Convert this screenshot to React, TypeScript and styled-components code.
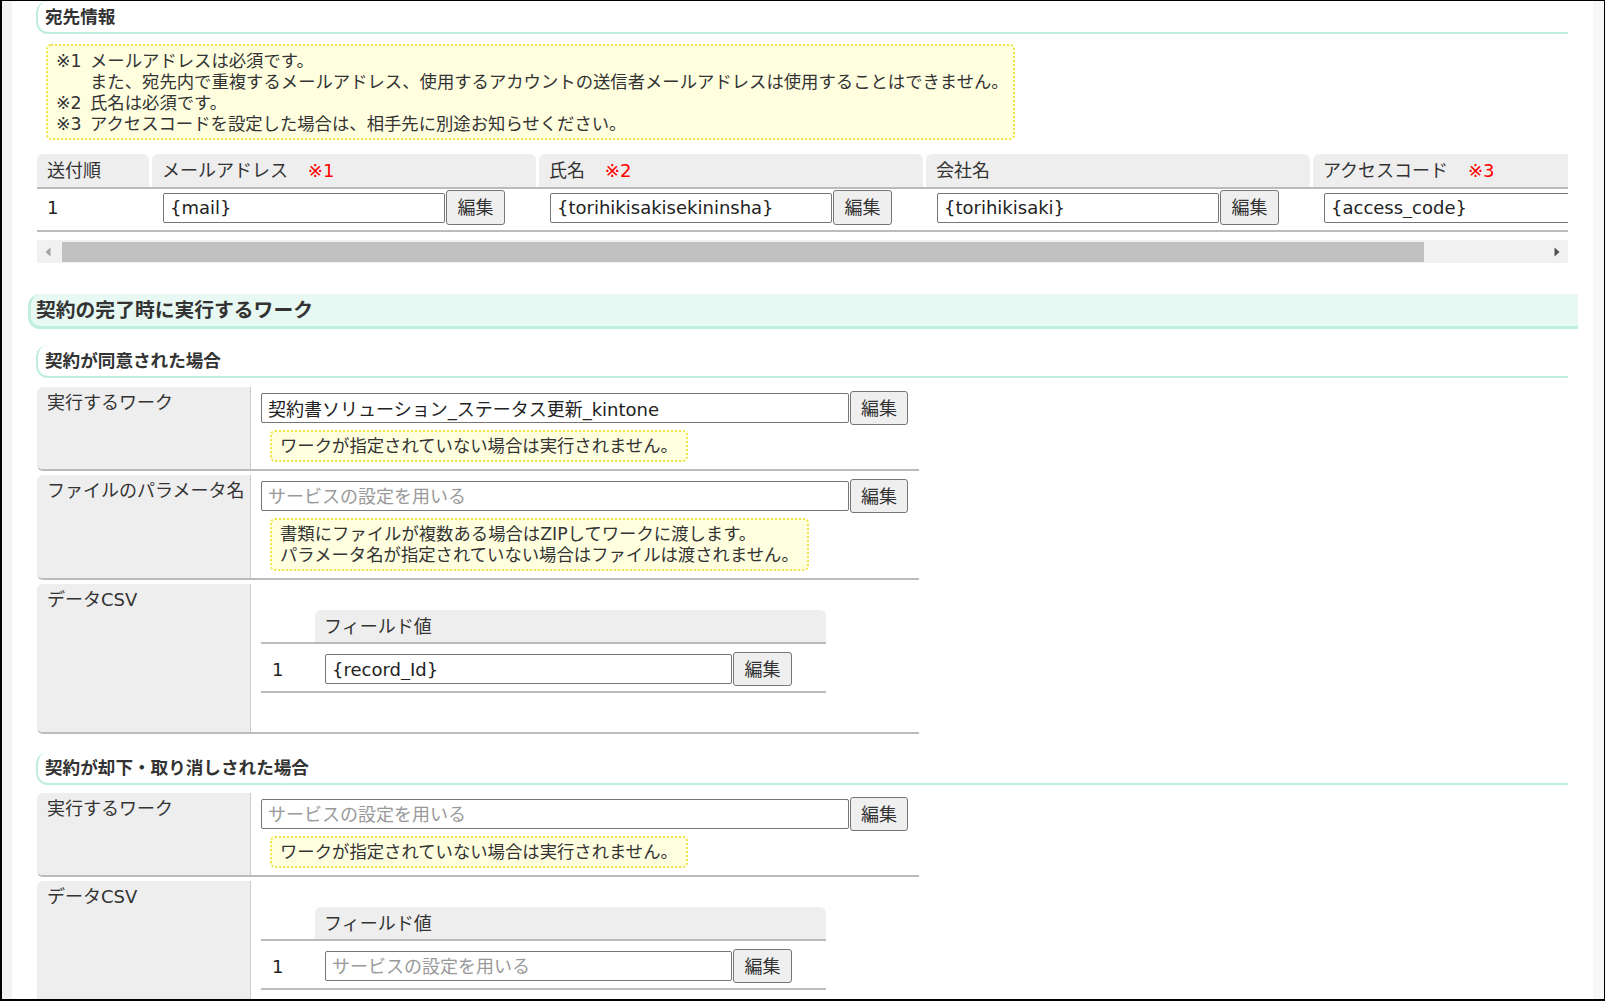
import React from "react";
import styled, { createGlobalStyle } from "styled-components";

const GlobalStyle = createGlobalStyle`
  html, body { margin: 0; padding: 0; background: #fff; }
  body {
    font-family: "DejaVu Sans", "Noto Sans CJK JP", sans-serif;
    color: #333;
  }
  * { box-sizing: border-box; }
`;

const MINT = "#bfeedf";
const FONT = "18px";
const SMALL = "17.35px";

const Frame = styled.div`
  width: 1605px;
  height: 1001px;
  border: 1px solid #000;
  border-left-width: 2px;
  border-bottom-width: 2px;
  display: flex;
  overflow: hidden;
  background: #fff;
`;

const SideStrip = styled.div<{ $w: number; $bg: string }>`
  flex: 0 0 ${(p) => p.$w}px;
  background: ${(p) => p.$bg};
`;

const Main = styled.main`
  flex: 1;
  min-width: 0;
  padding: 0 25px 0 24px;
  overflow: hidden;
  font-size: ${FONT};
  line-height: 21px;
`;

const SubHeader = styled.h3<{ $mt: number }>`
  margin: ${(p) => p.$mt}px 0 0;
  height: 33px;
  padding: 0 0 2px 7px;
  border-left: 2px solid ${MINT};
  border-bottom: 2px solid ${MINT};
  border-radius: 12px 0 0 12px;
  display: flex;
  align-items: center;
  font-family: "Noto Sans CJK JP", sans-serif;
  font-size: 17.6px;
  font-weight: bold;
  color: #333;
`;

const BigHeader = styled.h2`
  margin: 31px -10px 0 -8px;
  height: 35px;
  padding: 0 0 3px 5px;
  background: #e8f8f2;
  border-left: 3px solid ${MINT};
  border-bottom: 3px solid ${MINT};
  border-radius: 12px 0 0 12px;
  display: flex;
  align-items: center;
  font-family: "Noto Sans CJK JP", sans-serif;
  font-size: 19.8px;
  font-weight: bold;
  color: #333;
`;

const NoteBox = styled.div`
  margin: 10px 0 0 10px;
  width: 969px;
  padding: 5px 8px 3px;
  border: 2px dotted #eee44a;
  border-radius: 5px;
  background: #ffffe0;
  color: #333;
  font-size: ${SMALL};
  white-space: nowrap;
`;

const NoteItem = styled.div`
  display: grid;
  grid-template-columns: 34px 1fr;
`;

const Hint = styled.div`
  display: inline-block;
  margin: 5px 0 0 9px;
  padding: 4px 8px 3px;
  border: 2px dotted #eee44a;
  border-radius: 5px;
  background: #ffffe0;
  color: #333;
  font-size: ${SMALL};
  white-space: nowrap;
`;

/* ---------- recipient table ---------- */

const ScrollArea = styled.div`
  margin: 14px 0 0 1px;
  width: 1531px;
  overflow: hidden;
`;

const GridRow = styled.div`
  display: grid;
  grid-template-columns: 112px repeat(4, 384px);
  column-gap: 3px;
  width: max-content;
  border-bottom: 2px solid #bbb;
`;

const HeadCell = styled.div`
  height: 33px;
  padding-left: 10px;
  display: flex;
  align-items: center;
  background: #eee;
  border-radius: 6px 6px 0 0;
  color: #333;
  white-space: nowrap;
`;

const Req = styled.span`
  margin-left: 1.1em;
  color: #ff0000;
`;

const DataCell = styled.div<{ $pl: number }>`
  height: 41px;
  padding: 1px 0 0 ${(p) => p.$pl}px;
`;

const IndexText = styled.div`
  height: 35px;
  display: flex;
  align-items: center;
  color: #222;
`;

const InputLine = styled.div<{ $h?: number }>`
  display: flex;
  align-items: center;
  height: ${(p) => p.$h ?? 34}px;
`;

const TextInput = styled.input<{ $w: number }>`
  width: ${(p) => p.$w}px;
  height: 30px;
  padding: 0 6px;
  border: 1px solid #767676;
  border-radius: 2px;
  background: #fff;
  font: inherit;
  font-size: ${FONT};
  color: #222;
  outline: none;
  &::placeholder { color: #999; }
`;

const EditButton = styled.button<{ $w?: number; $h?: number }>`
  width: ${(p) => p.$w ?? 58}px;
  height: ${(p) => p.$h ?? 34}px;
  margin-left: 1px;
  padding: 0;
  border: 1px solid #767676;
  border-radius: 3px;
  background: #efefef;
  font: inherit;
  font-size: ${FONT};
  color: #333;
  flex: 0 0 auto;
`;

const ScrollTrack = styled.div`
  margin: 8px 0 0 1px;
  width: 1531px;
  height: 23px;
  background: #f1f1f1;
  display: flex;
  align-items: stretch;
`;

const ArrowBox = styled.div`
  flex: 0 0 22px;
  display: flex;
  align-items: center;
  justify-content: center;
`;

const Thumb = styled.div`
  flex: 0 0 1362px;
  margin: 2px 0 1px 3px;
  background: #c1c1c1;
`;

const Spacer = styled.div`
  flex: 1;
`;

/* ---------- form tables ---------- */

const FormRow = styled.div<{ $mt: number }>`
  display: grid;
  grid-template-columns: 214px 1fr;
  width: 882px;
  margin: ${(p) => p.$mt}px 0 0 1px;
  border-bottom: 2px solid #bbb;
  border-radius: 6px 0 0 6px;
  overflow: hidden;
`;

const LabelCell = styled.div`
  background: #eee;
  border-right: 1px solid #ccc;
  padding: 5px 10px;
  color: #333;
  white-space: nowrap;
`;

const ValueCell = styled.div`
  padding: 4px 10px 7px;
  display: flex;
  flex-direction: column;
  align-items: flex-start;
`;

const CsvTable = styled.div`
  margin: 22px 0 32px;
  width: 565px;
`;

const CsvRow = styled.div<{ $head?: boolean }>`
  display: grid;
  grid-template-columns: 54px 1fr;
  border-bottom: 2px solid #bbb;
  padding: ${(p) => (p.$head ? "0" : "8px 0 5px")};
`;

const CsvHeadCell = styled.div`
  grid-column: 2;
  height: 32px;
  padding-left: 9px;
  display: flex;
  align-items: center;
  background: #eee;
  border-radius: 6px 6px 0 0;
  color: #333;
`;

const CsvIndex = styled.div`
  width: 64px;
  padding-left: 11px;
  display: flex;
  align-items: center;
  color: #222;
`;

const CsvValue = styled.div`
  display: flex;
  align-items: center;
  margin-left: 10px;
`;

const Arrow: React.FC<{ dir: "left" | "right"; color: string }> = ({ dir, color }) => (
  <svg width="6" height="10" viewBox="0 0 6 10">
    {dir === "left" ? (
      <polygon points="5.5,0.5 5.5,9.5 0.5,5" fill={color} />
    ) : (
      <polygon points="0.5,0.5 0.5,9.5 5.5,5" fill={color} />
    )}
  </svg>
);

const columns = [
  { title: "メールアドレス", req: "※1", value: "{mail}" },
  { title: "氏名", req: "※2", value: "{torihikisakisekininsha}" },
  { title: "会社名", req: "", value: "{torihikisaki}" },
  { title: "アクセスコード", req: "※3", value: "{access_code}", noButton: true },
];

const WorkRow: React.FC<{ mt: number; label: string; value?: string; hint: React.ReactNode }> = ({
  mt,
  label,
  value,
  hint,
}) => (
  <FormRow $mt={mt}>
    <LabelCell>{label}</LabelCell>
    <ValueCell>
      <InputLine>
        <TextInput $w={588} readOnly value={value ?? ""} placeholder="サービスの設定を用いる" />
        <EditButton>編集</EditButton>
      </InputLine>
      <Hint>{hint}</Hint>
    </ValueCell>
  </FormRow>
);

const CsvFormRow: React.FC<{ mt: number; value?: string }> = ({ mt, value }) => (
  <FormRow $mt={mt}>
    <LabelCell>データCSV</LabelCell>
    <ValueCell>
      <CsvTable>
        <CsvRow $head>
          <CsvHeadCell>フィールド値</CsvHeadCell>
        </CsvRow>
        <CsvRow>
          <CsvIndex>1</CsvIndex>
          <CsvValue>
            <InputLine $h={34}>
              <TextInput $w={407} readOnly value={value ?? ""} placeholder="サービスの設定を用いる" />
              <EditButton $w={59}>編集</EditButton>
            </InputLine>
          </CsvValue>
        </CsvRow>
      </CsvTable>
    </ValueCell>
  </FormRow>
);

export default function App() {
  return (
    <>
      <GlobalStyle />
      <Frame>
        <SideStrip $w={10} $bg="#f3f3f3" />
        <Main>
          <SubHeader $mt={0}>宛先情報</SubHeader>
          <NoteBox>
            <NoteItem>
              <span>※1</span>
              <span>
                メールアドレスは必須です。
                <br />
                また、宛先内で重複するメールアドレス、使用するアカウントの送信者メールアドレスは使用することはできません。
              </span>
            </NoteItem>
            <NoteItem>
              <span>※2</span>
              <span>氏名は必須です。</span>
            </NoteItem>
            <NoteItem>
              <span>※3</span>
              <span>アクセスコードを設定した場合は、相手先に別途お知らせください。</span>
            </NoteItem>
          </NoteBox>

          <ScrollArea>
            <GridRow>
              <HeadCell>送付順</HeadCell>
              {columns.map((c) => (
                <HeadCell key={c.title}>
                  {c.title}
                  {c.req && <Req>{c.req}</Req>}
                </HeadCell>
              ))}
            </GridRow>
            <GridRow>
              <DataCell $pl={10}>
                <IndexText>1</IndexText>
              </DataCell>
              {columns.map((c) => (
                <DataCell key={c.title} $pl={11}>
                  <InputLine $h={35}>
                    <TextInput $w={282} readOnly value={c.value} />
                    {!c.noButton && (
                      <EditButton $w={59} $h={35}>
                        編集
                      </EditButton>
                    )}
                  </InputLine>
                </DataCell>
              ))}
            </GridRow>
          </ScrollArea>
          <ScrollTrack>
            <ArrowBox>
              <Arrow dir="left" color="#a3a3a3" />
            </ArrowBox>
            <Thumb />
            <Spacer />
            <ArrowBox>
              <Arrow dir="right" color="#505050" />
            </ArrowBox>
          </ScrollTrack>

          <BigHeader>契約の完了時に実行するワーク</BigHeader>

          <SubHeader $mt={16}>契約が同意された場合</SubHeader>
          <WorkRow
            mt={9}
            label="実行するワーク"
            value="契約書ソリューション_ステータス更新_kintone"
            hint="ワークが指定されていない場合は実行されません。"
          />
          <WorkRow
            mt={4}
            label="ファイルのパラメータ名"
            hint={
              <>
                書類にファイルが複数ある場合はZIPしてワークに渡します。
                <br />
                パラメータ名が指定されていない場合はファイルは渡されません。
              </>
            }
          />
          <CsvFormRow mt={4} value="{record_Id}" />

          <SubHeader $mt={18}>契約が却下・取り消しされた場合</SubHeader>
          <WorkRow mt={8} label="実行するワーク" hint="ワークが指定されていない場合は実行されません。" />
          <CsvFormRow mt={4} />
        </Main>
        <SideStrip $w={11} $bg="#f7f7f7" />
      </Frame>
    </>
  );
}
